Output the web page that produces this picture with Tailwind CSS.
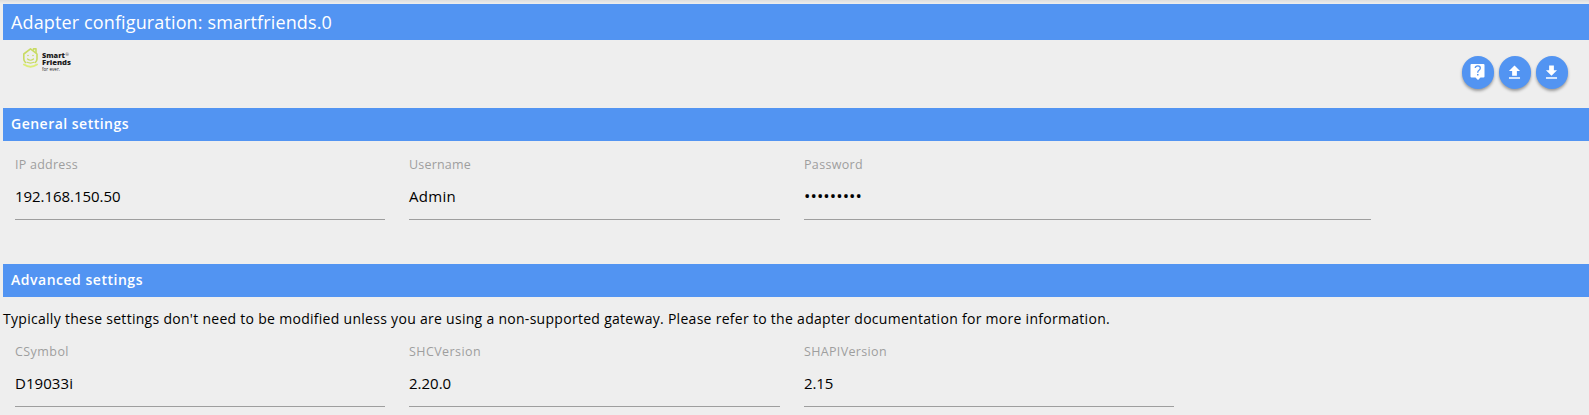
<!DOCTYPE html>
<html lang="en"><head><meta charset="utf-8"><title>Adapter configuration</title>
<script src="https://cdn.jsdelivr.net/npm/@tailwindcss/browser@4"></script></head>
<body class="h-[415px] overflow-hidden bg-[#eeeeee] font-['Open_Sans','Noto_Sans',sans-serif] text-black">
<div class="h-1 bg-linear-to-b from-[#dedede] to-[#eeeeee]"></div>
<main class="ml-[3px]">
<header class="flex h-9 items-center bg-[#5294f2] pl-2 text-[18px] text-white"><h1 class="whitespace-nowrap tracking-[0.13px]">Adapter configuration: smartfriends.0</h1></header>
<div class="flex h-[68px] justify-between pl-[19px] pr-[21px]">
<svg class="mt-[7px]" width="52" height="26" viewBox="0 0 52 26">
<g fill="none" stroke="#c8db62" stroke-width="1.6" stroke-linecap="round" stroke-linejoin="round">
<path d="M3.500 15.500Q1.800 14 1.800 12V7L8.500 1.800 15 7v5q0 2-1.700 3.500"/><path d="M11.500 3V1.800H14V5.500"/><path d="M5.500 12q3 2.500 6 0M5 15.300q3.500 1.500 7 0" stroke-width="1.200"/><path d="M2 17.500q6.500 4.500 13 0" stroke="#dcec78" stroke-width="2"/></g>
<circle cx="6" cy="8.500" r=".8" fill="#c8db62"/><circle cx="11" cy="8.500" r=".8" fill="#c8db62"/>
<g font-family="Open Sans" fill="#1c1c1c"><text x="20" y="11" font-size="7.500" font-weight="800" textLength="23" lengthAdjust="spacingAndGlyphs">Smart</text><text x="43.500" y="9" font-size="4">®</text><text x="20" y="18.300" font-size="7.500" font-weight="800" textLength="29" lengthAdjust="spacingAndGlyphs">Friends</text><text x="20" y="24" font-size="4.500" textLength="18">for ever.</text></g></svg>
<div class="flex gap-[4.300px] pt-[16px]">
<button class="flex size-[32.5px] items-center justify-center rounded-full bg-[#5294f2] shadow-[0_2px_3px_rgba(0,0,0,0.35)]"><svg width="18" height="18" viewBox="0 0 18 18"><path fill="#fff" d="M2.500 1h12q1 0 1 1v11.500q0 1-1 1h-3L9 17l-2.500-2.500h-4q-1 0-1-1V2q0-1 1-1z"/><path d="M6.200 5q.2-2.200 2.600-2.200 2.500 0 2.500 2.200 0 1.300-1.300 2.200-1.300.9-1.300 2.500" fill="none" stroke="#5294f2" stroke-width="1.300"/><path fill="#5294f2" d="M8 11h1.500v1.500H8z"/></svg></button>
<button class="flex size-[32.5px] items-center justify-center rounded-full bg-[#5294f2] shadow-[0_2px_3px_rgba(0,0,0,0.35)]"><svg width="19" height="19" viewBox="0 0 24 24" fill="#fff"><path d="M9 16h6v-6h4l-7-7-7 7h4zM5 18h14v2H5z"/></svg></button>
<button class="flex size-[32.5px] items-center justify-center rounded-full bg-[#5294f2] shadow-[0_2px_3px_rgba(0,0,0,0.35)]"><svg width="19" height="19" viewBox="0 0 24 24" fill="#fff"><path d="M19 9h-4V3H9v6H5l7 7 7-7zM5 18v2h14v-2H5z"/></svg></button>
</div></div>
<section><h2 class="flex h-[33px] items-center bg-[#5294f2] pb-[2px] pl-2 text-[14px] font-semibold tracking-[0.486px] text-white">General settings</h2>
<div class="flex h-[123px] gap-6 pl-3 pt-[14px]">
<div class="h-[65px] w-[370px] border-b border-[#9e9e9e]"><div class="h-[19px] text-[12.5px] leading-[19px] tracking-[0.245px] text-[#9e9e9e]">IP address</div><div class="mt-[10px] text-[15px] leading-[24px] tracking-[-0.048px]">192.168.150.50</div></div>
<div class="h-[65px] w-[371px] border-b border-[#9e9e9e]"><div class="h-[19px] text-[12.5px] leading-[19px] tracking-[0.2px] text-[#9e9e9e]">Username</div><div class="mt-[10px] text-[15px] leading-[24px] tracking-[0.29px]">Admin</div></div>
<div class="h-[65px] w-[567px] border-b border-[#9e9e9e]"><div class="h-[19px] text-[12.5px] leading-[19px] tracking-[0.33px] text-[#9e9e9e]">Password</div><div class="mt-[10px] text-[17px] leading-[24px] tracking-[0.05px]">•••••••••</div></div>
</div></section>
<section><h2 class="flex h-[33px] items-center bg-[#5294f2] pb-[2px] pl-2 text-[14px] font-semibold tracking-[0.519px] text-white">Advanced settings</h2>
<p class="mt-3 h-5 whitespace-nowrap text-[14px] leading-5 tracking-[0.288px]">Typically these settings don't need to be modified unless you are using a non-supported gateway. Please refer to the adapter documentation for more information.</p>
<div class="flex gap-6 pl-3 pt-[13px]">
<div class="h-[65px] w-[370px] border-b border-[#9e9e9e]"><div class="h-[19px] text-[12.5px] leading-[19px] tracking-[0.44px] text-[#9e9e9e]">CSymbol</div><div class="mt-[10px] text-[15px] leading-[24px] tracking-[0.06px]">D19033i</div></div>
<div class="h-[65px] w-[371px] border-b border-[#9e9e9e]"><div class="h-[19px] text-[12.5px] leading-[19px] tracking-[0.417px] text-[#9e9e9e]">SHCVersion</div><div class="mt-[10px] text-[15px] leading-[24px]">2.20.0</div></div>
<div class="h-[65px] w-[370px] border-b border-[#9e9e9e]"><div class="h-[19px] text-[12.5px] leading-[19px] tracking-[0.344px] text-[#9e9e9e]">SHAPIVersion</div><div class="mt-[10px] text-[15px] leading-[24px] tracking-[-0.1px]">2.15</div></div>
</div></section></main>
</body></html>
